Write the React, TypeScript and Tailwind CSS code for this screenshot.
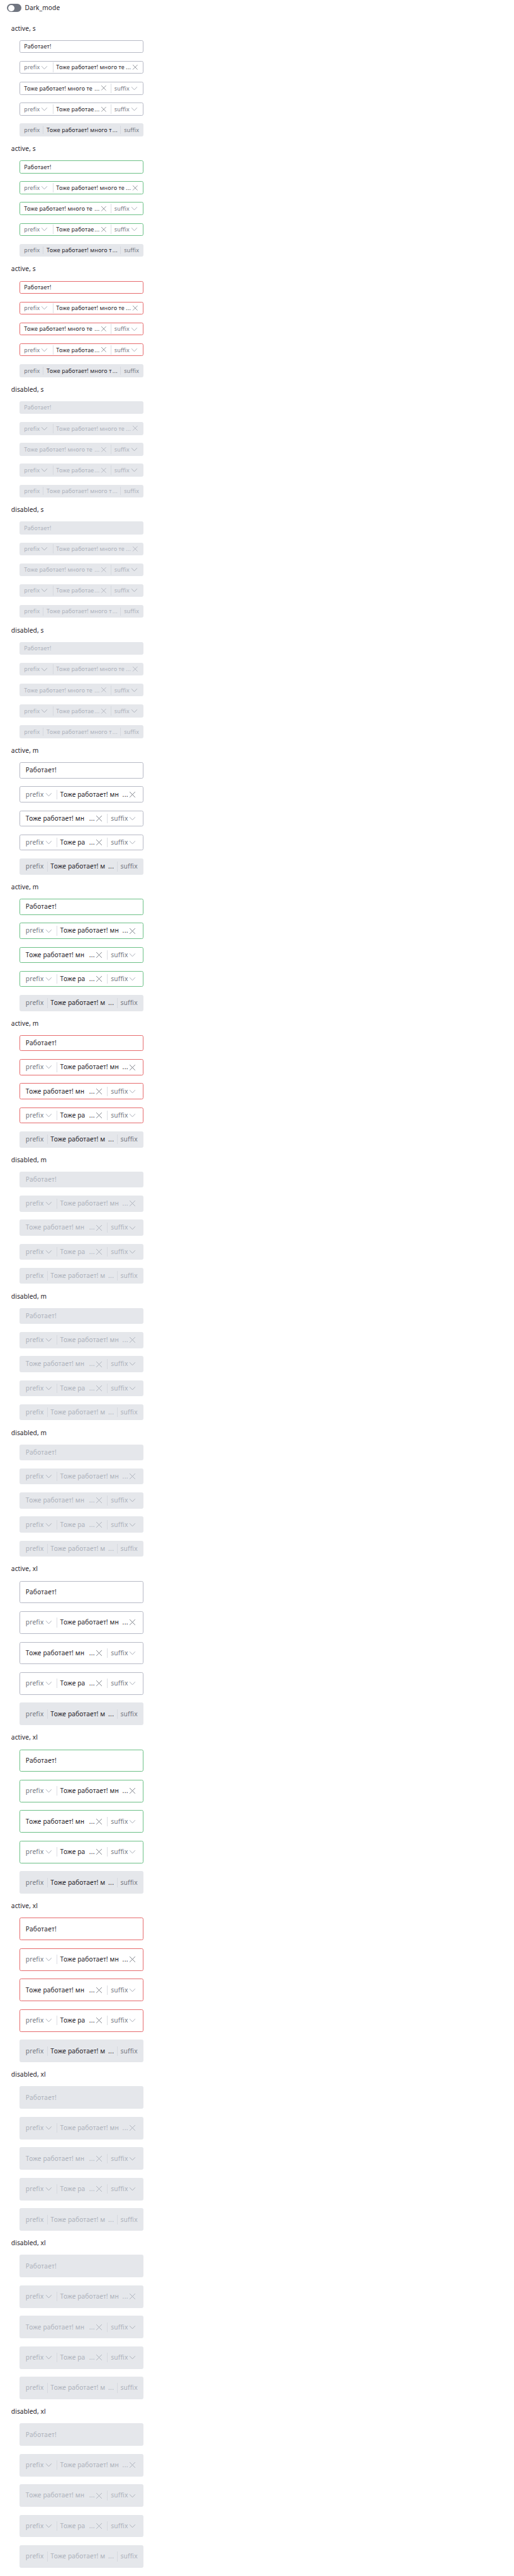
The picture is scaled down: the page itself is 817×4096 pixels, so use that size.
type Size = "s" | "m" | "xl";
type Tone = "default" | "success" | "error" | "disabled";

const ROWS: Record<Size, string[]> = {
  s: ["Тоже работает! много те", "Тоже работает! много те", "Тоже работае", "Тоже работает! много т"],
  m: ["Тоже работает! мн", "Тоже работает! мн", "Тоже ра", "Тоже работает! м"],
  xl: ["Тоже работает! мн", "Тоже работает! мн", "Тоже ра", "Тоже работает! м"],
};

const BORDER: Record<Tone, string> = {
  default: "border-[#b6b9c5] bg-white",
  success: "border-[#6bc086] bg-white",
  error: "border-[#e66a6c] bg-white",
  disabled: "border-[#e5e7eb] bg-[#e5e7eb]",
};

const BOX: Record<Size, string> = {
  s: "h-[32px] px-[10.4px] text-[14px]",
  m: "h-[40px] px-[14.4px] text-[16px]",
  xl: "h-[56px] px-[14.4px] text-[16px]",
};

const SECTION: Record<Size, string> = {
  s: "h-[300px]",
  m: "h-[340px]",
  xl: "h-[420px]",
};

function Chevron({ muted }: { muted: boolean }) {
  return (
    <svg className={`h-[8px] w-[14px] shrink-0 overflow-visible ${muted ? "text-[#a9aeb8]" : "text-[#a6aab5]"}`} viewBox="0 0 14 8" fill="none" stroke="currentColor">
      <path d="M0.1 0.4 7 7.6 13.9 0.4" strokeWidth="1.5" />
    </svg>
  );
}

function Cross({ size, muted }: { size: Size; muted: boolean }) {
  return (
    <svg
      className={`ml-[3.5px] shrink-0 overflow-visible ${size === "s" ? "h-[12px] w-[12px]" : "h-[14px] w-[14px]"} ${muted ? "text-[#a9aeb8]" : "text-[#72767f]"}`}
      viewBox="0 0 14 14"
      fill="none"
      stroke="currentColor"
    >
      <path d="M0.1 0.1 13.9 13.9M13.9 0.1 0.1 13.9" strokeWidth="1.4" />
    </svg>
  );
}

function Divider({ size, readOnly, muted }: { size: Size; readOnly?: boolean; muted: boolean }) {
  return (
    <span
      className={`w-px shrink-0 ${muted || readOnly ? "bg-[#d6d9df]" : "bg-[#dcdee3]"} ${size === "s" && readOnly ? "h-[20px]" : "h-[24px]"}`}
    />
  );
}

function Affix({ size, text, muted }: { size: Size; text: "prefix" | "suffix"; muted: boolean }) {
  const width =
    text === "prefix" ? (size === "s" ? "w-[39px]" : "w-[45px]") : size === "s" ? "w-[37px]" : "w-[42px]";
  return (
    <span className={`shrink-0 whitespace-nowrap tracking-[0.3px] ${width} ${muted ? "text-[#adb2bb]" : "text-[#72767f]"}`}>
      {text}
    </span>
  );
}

interface FieldProps {
  size: Size;
  tone: Tone;
  text: string;
  prefix?: boolean;
  suffix?: boolean;
  readOnly?: boolean;
}

function Field({ size, tone, text, prefix, suffix, readOnly }: FieldProps) {
  const muted = tone === "disabled";
  const s = size === "s";
  return (
    <div className={`flex w-[310px] items-center rounded-[4px] border ${BOX[size]} ${BORDER[readOnly ? "disabled" : tone]}`}>
      {prefix && (
        <>
          <Affix size={size} text="prefix" muted={muted} />
          {readOnly ? (
            <span className="w-[8px] shrink-0" />
          ) : (
            <span className="flex w-[32px] shrink-0 items-center pl-[5px]">
              <Chevron muted={muted} />
            </span>
          )}
          <Divider size={size} readOnly={readOnly} muted={muted} />
          <span className="w-[8px] shrink-0" />
        </>
      )}
      <span
        className={`flex min-w-0 flex-1 justify-between whitespace-nowrap ${prefix || suffix ? "tracking-[0.22px]" : "tracking-[0.38px]"} ${muted ? "text-[#adb2bb]" : "text-[#1f2229]"}`}
      >
        <span>{text}</span>
        {(prefix || suffix) && <span className="tracking-[0.6px]">...</span>}
      </span>
      {(prefix || suffix) && !readOnly && <Cross size={size} muted={muted} />}
      {suffix ? (
        <>
          <span className={`shrink-0 ${readOnly ? "w-[7px]" : s ? "w-[12px]" : "w-[13px]"}`} />
          <Divider size={size} readOnly={readOnly} muted={muted} />
          <span className="w-[8px] shrink-0" />
          <Affix size={size} text="suffix" muted={muted} />
          {!readOnly && (
            <span className="flex w-[24px] shrink-0 items-center pl-[5px]">
              <Chevron muted={muted} />
            </span>
          )}
        </>
      ) : (
        prefix && <span className={`shrink-0 ${s ? "w-[4px]" : "w-[5px]"}`} />
      )}
    </div>
  );
}

function Section({ size, tone }: { size: Size; tone: Tone }) {
  const [a, b, c, d] = ROWS[size];
  const common = { size, tone };
  return (
    <section className={SECTION[size]}>
      <h2 className="h-[40px] pl-[28px] pt-[9px] text-[16px] leading-[24px] tracking-[0.12px]">
        {tone === "disabled" ? "disabled" : "active"}, {size}
      </h2>
      <div className="flex flex-col gap-[20px] py-[10px] pl-[48px]">
        <Field {...common} text="Работает!" />
        <Field {...common} text={a} prefix />
        <Field {...common} text={b} suffix />
        <Field {...common} text={c} prefix suffix />
        <Field {...common} text={d} prefix suffix readOnly />
      </div>
    </section>
  );
}

const SIZES: Size[] = ["s", "m", "xl"];
const TONES: Tone[] = ["default", "success", "error", "disabled", "disabled", "disabled"];

export default function App() {
  return (
    <div className="h-[6420px] w-[1280px] overflow-hidden bg-white font-['Noto_Sans',sans-serif] text-[#1f2229] [zoom:0.638]">
      <header className="flex h-[50px] items-start pl-[18px] pt-[10px]">
        <span className="flex h-[20px] w-[36px] items-center rounded-full bg-[#717681] pl-[2px]">
          <span className="h-[16px] w-[16px] rounded-full bg-white" />
        </span>
        <span className="pl-[8px] text-[16px] leading-[20px] tracking-[0.12px]">Dark_mode</span>
      </header>
      {SIZES.map((size) => TONES.map((tone, i) => <Section key={`${size}-${i}`} size={size} tone={tone} />))}
    </div>
  );
}
